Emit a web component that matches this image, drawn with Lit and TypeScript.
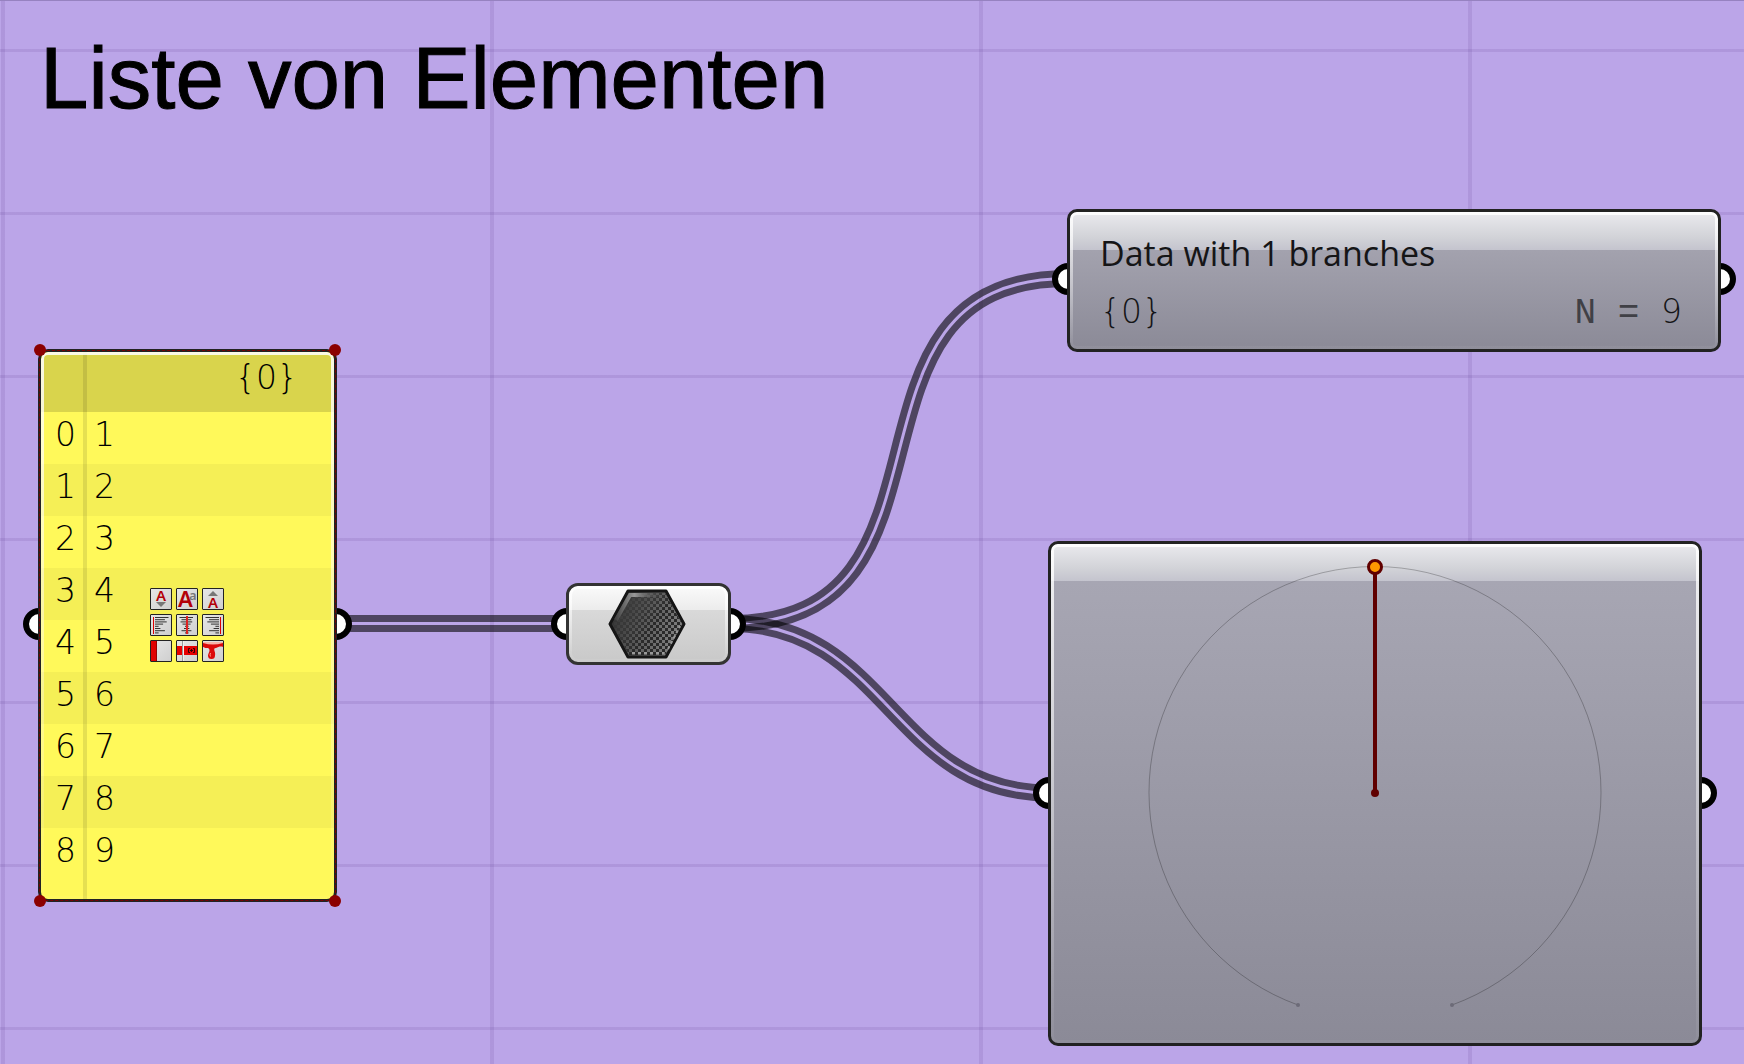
import { LitElement, html, css, svg } from "lit";
import { customElement, property } from "lit/decorators.js";

const shellStyles = css`
  :host {
    display: block;
  }
  .shell {
    position: relative;
    box-sizing: border-box;
    width: 100%;
    height: 100%;
    border: 3px solid #222;
    border-radius: 10px;
    overflow: hidden;
  }
  .shell::after {
    content: "";
    position: absolute;
    inset: 0;
    padding: 3px;
    border-radius: 7px;
    pointer-events: none;
    background: linear-gradient(rgba(255, 255, 255, 0.85), rgba(255, 255, 255, 0.04));
    mask: linear-gradient(#000 0 0) content-box exclude, linear-gradient(#000 0 0);
  }
`;

/* Panel that lists the items of one branch */
@customElement("list-panel")
class ListPanel extends LitElement {
  @property({ type: Array }) items: number[] = [];

  static styles = [
    shellStyles,
    css`
      .shell {
        background: linear-gradient(90deg, transparent 42px, rgba(0, 0, 0, 0.1) 42px 46px, transparent 46px), #fff95a;
      }
      .outline {
        position: absolute;
        inset: 1px;
        border: 1px dashed #7a0000;
        border-radius: 8px;
        pointer-events: none;
      }
      .grip {
        position: absolute;
        width: 12px;
        height: 12px;
        border-radius: 50%;
        background: #8b0000;
      }
      .tl { left: -4px; top: -5px; }
      .tr { right: -4px; top: -5px; }
      .bl { left: -4px; bottom: -5px; }
      .br { right: -4px; bottom: -5px; }
      table {
        width: 100%;
        border-collapse: separate;
        border-spacing: 0;
        font: 200 33px/46px "DejaVu Sans", sans-serif;
        color: #000;
      }
      th,
      td {
        height: 52px;
        box-sizing: border-box;
        padding: 0 36px 0 7px;
        vertical-align: top;
        font-weight: 200;
        text-align: left;
      }
      thead th {
        height: 60px;
        padding-top: 3px;
        text-align: right;
      }
      thead tr {
        background: rgba(0, 0, 0, 0.15);
      }
      .index {
        width: 46px;
        padding: 0 0 0 14px;
        border-right: 4px solid transparent;
      }
      tbody tr:nth-child(even) {
        background: rgba(0, 0, 0, 0.04);
      }
      .tools {
        position: absolute;
        left: 112px;
        top: 239px;
        display: grid;
        grid-template-columns: repeat(3, 22px);
        gap: 4px;
      }
      button {
        width: 22px;
        height: 22px;
        padding: 0;
        border: 1px solid #222;
        border-radius: 1px;
        background: linear-gradient(135deg, #e6e6e6, #cfcfcf);
      }
      button svg {
        display: block;
        overflow: visible;
      }
      text {
        font-family: "Noto Sans", sans-serif;
        font-weight: 600;
        fill: #b30008;
      }
    `,
  ];

  private lines(kind: "left" | "center" | "right") {
    return [15, 11, 13, 9, 4, 6, 11, 4].map((w, i) => {
      const x = kind === "left" ? 4 : kind === "right" ? 16 - w * 0.9 : 10 - w / 2;
      return svg`<rect x=${x} y=${2 + i * 2.2} width=${w * 0.9} height="1" fill="#333"/>`;
    });
  }

  private tool(label: string, body: unknown) {
    return html`<button type="button" aria-label=${label}>
      <svg width="20" height="20" viewBox="0 0 20 20">${body}</svg>
    </button>`;
  }

  render() {
    return html`
      <div class="shell">
        <table>
          <thead>
            <tr>
              <th class="index"></th>
              <th scope="col">{0}</th>
            </tr>
          </thead>
          <tbody>
            ${this.items.map(
              (item, i) => html`<tr>
                <th class="index" scope="row">${i}</th>
                <td>${item}</td>
              </tr>`
            )}
          </tbody>
        </table>
      </div>
      <div class="outline"></div>
      <span class="grip tl"></span><span class="grip tr"></span>
      <span class="grip bl"></span><span class="grip br"></span>
      <div class="tools">
        ${this.tool("Smaller text", svg`<text x="10" y="12" font-size="15" text-anchor="middle">A</text>
          <path d="M5 13h10l-5 5z" fill="#777"/>`)}
        ${this.tool("Font", svg`<text x="1" y="18" font-size="22">A</text>
          <text x="12" y="11" font-size="13" style="fill:#777">a</text>`)}
        ${this.tool("Larger text", svg`<path d="M5 7h10l-5-5z" fill="#777"/>
          <text x="10" y="19" font-size="15" text-anchor="middle">A</text>`)}
        ${this.tool("Align left", svg`${this.lines("left")}<rect x="2" y="2" width="1" height="17" fill="#d00"/>`)}
        ${this.tool("Align centre", svg`${this.lines("center")}<rect x="9" y="1" width="2" height="18" fill="#d22"/>`)}
        ${this.tool("Align right", svg`${this.lines("right")}<rect x="17" y="2" width="1" height="17" fill="#d00"/>`)}
        ${this.tool("Index column", svg`<rect width="6" height="20" fill="#e00000"/><rect x="5" width="1" height="20" fill="#900"/>`)}
        ${this.tool("Row labels", svg`<rect y="5" width="20" height="9" fill="#e60000"/>
          <path d="M5.500 0v20" stroke="#999"/><path d="M6.500 0v20" stroke="#eee"/>
          <path d="M13 7.500h-1.500v4h1.500M16 7.500h1.500v4h-1.500M13 9.500h3M14.500 8v3" fill="none" stroke="#300"/>`)}
        ${this.tool("Colour", svg`<path d="M0 1h20v5c-2-1-5 0-7 1c-2 0-2 1-1.500 3c.7 2 .8 3 .5 4.500a3.500 3.500 0 0 1-7 0c0-2 1.500-3 1.500-5c0-2-1-2.500-3-2.500c-1.500 0-2-.5-3.500-1z" fill="#dc0a0a"/>
          <path d="M0 1h20v1q-10 3-20 0z" fill="#f5b4aa"/><path d="M7.500 12q-1 2 0 3.500" stroke="#ff9a8a" fill="none"/>`)}
      </div>
    `;
  }
}

/* Data relay with the hexagonal badge */
@customElement("data-relay")
class DataRelay extends LitElement {
  static styles = [
    shellStyles,
    css`
      .shell {
        display: flex;
        align-items: center;
        justify-content: center;
        padding-right: 4px;
        border-color: #333;
        border-radius: 12px;
        background: linear-gradient(#fafafa 0%, #ececec 31%, #d9d9d9 32%, #c9c9c9 100%);
      }
      .shell::after {
        border-radius: 9px;
      }
    `,
  ];

  render() {
    return html`<div class="shell">
      <svg width="78" height="70" viewBox="0 0 78 70" role="img" aria-label="Data">
        <defs>
          <linearGradient id="face" x1="0" y1="0.3" x2="1" y2="0.7">
            <stop offset="0" stop-color="#303030" />
            <stop offset="1" stop-color="#888" />
          </linearGradient>
          <linearGradient id="fade" x1="0" y1="0.2" x2="0.6" y2="0.6">
            <stop offset="0.1" stop-color="#000" />
            <stop offset="0.9" stop-color="#fff" />
          </linearGradient>
          <linearGradient id="edge" x1="0" y1="0" x2="1" y2="0">
            <stop offset="0" stop-color="#444" />
            <stop offset="0.4" stop-color="#999" />
            <stop offset="1" stop-color="#555" stop-opacity="0" />
          </linearGradient>
          <pattern id="dots" width="6" height="6" patternUnits="userSpaceOnUse">
            <rect width="3" height="3" fill="#2a2a2a" />
            <rect x="3" y="3" width="3" height="3" fill="#2a2a2a" />
          </pattern>
          <mask id="right"><rect width="78" height="70" fill="url(#fade)" /></mask>
        </defs>
        <path d="M2 35L20 2H58L76 35L58 68H20Z" fill="url(#face)" stroke="#151515" stroke-width="3" stroke-linejoin="round" />
        <path d="M4 35L21 4H57L74 35L57 66H21Z" fill="url(#dots)" mask="url(#right)" />
        <path d="M8 31L22 6H54" fill="none" stroke="url(#edge)" stroke-width="4" />
        <path d="M60 60L72 37M24 64H56" stroke="#999" stroke-width="2" stroke-dasharray="3 3" />
      </svg>
    </div>`;
  }
}

/* Summary of the branches in a data tree */
@customElement("param-viewer")
class ParamViewer extends LitElement {
  @property({ type: Number }) count = 0;

  static styles = [
    shellStyles,
    css`
      .shell {
        padding: 13px 36px 0 30px;
        color: #151517;
        background: linear-gradient(#eaeaee 0, #d2d3d8 25px, #c4c4ce 38px, #a3a2ae 38px, #8b8a97 100%);
      }
      h2 {
        margin: 0;
        font: 400 34px/56px "Open Sans", sans-serif;
      }
      .branch {
        display: flex;
        justify-content: space-between;
        font: 200 33px/62px "DejaVu Sans", sans-serif;
      }
      .mono {
        font: 400 36px/62px "Liberation Mono", monospace;
        color: #404046;
        white-space: pre;
      }
    `,
  ];

  render() {
    return html`<div class="shell">
      <h2>Data with 1 branches</h2>
      <div class="branch">
        <span>{0}</span>
        <span><span class="mono">N = </span>${this.count}</span>
      </div>
    </div>`;
  }
}

/* Radial tree display with one root branch */
@customElement("tree-dial")
class TreeDial extends LitElement {
  static styles = [
    shellStyles,
    css`
      .shell {
        background: linear-gradient(#eaeaee 0, #d2d3d8 24px, #c4c4ce 37px, #a7a6b3 37px, #8b8a97 100%);
      }
      svg {
        display: block;
        margin: 0 auto;
      }
    `,
  ];

  render() {
    return html`<div class="shell">
      <svg width="500" height="490" viewBox="-250 -249 500 490" role="img" aria-label="Tree with one branch">
        <path d="M-77 212A226 226 0 1 1 77 212" fill="none" stroke="#000" stroke-opacity="0.25" />
        <circle cx="-77" cy="212" r="2" fill="#6c6b78" />
        <circle cx="77" cy="212" r="2" fill="#6c6b78" />
        <path d="M0 0V-226" stroke="#600000" stroke-width="4" />
        <circle r="4" fill="#600000" />
        <circle cy="-226" r="6.500" fill="#ff9800" stroke="#600000" stroke-width="3" />
      </svg>
    </div>`;
  }
}

interface Wire {
  from: [number, number];
  to: [number, number];
  reach: number;
}

const wires: Wire[] = [
  { from: [340, 623.5], to: [563, 623.5], reach: 110 },
  { from: [730, 623.5], to: [1068, 278.5], reach: 250 },
  { from: [730, 623.5], to: [1050, 793], reach: 158 },
];

function wirePath({ from: [x1, y1], to: [x2, y2], reach }: Wire) {
  return `M${x1} ${y1}C${x1 + reach} ${y1} ${x2 - reach} ${y2} ${x2} ${y2}`;
}

@customElement("app-root")
class AppRoot extends LitElement {
  static styles = css`
    :host {
      display: block;
      position: relative;
      min-height: 100vh;
      overflow: hidden;
      box-sizing: border-box;
      border-top: 1px solid #9682c0;
      background:
        repeating-linear-gradient(90deg, rgba(60, 20, 110, 0.1) 0 4px, transparent 4px 489px) 1px 0,
        repeating-linear-gradient(rgba(60, 20, 110, 0.1) 0 3px, transparent 3px 163px) 0 48px / 100% 163px,
        #bba5e8;
      background-repeat: repeat;
    }
    h1 {
      margin: 0;
      padding: 27px 40px;
      font: 400 87px/100px "Liberation Sans", Arial, sans-serif;
      color: #000;
      -webkit-text-stroke: 1px #000;
    }
    .wires {
      position: absolute;
      left: 0;
      top: -1px;
      overflow: visible;
    }
    .node {
      position: absolute;
    }
    .node > :last-child {
      position: relative;
      width: 100%;
      height: 100%;
    }
    .port {
      position: absolute;
      width: 32px;
      height: 32px;
      box-sizing: border-box;
      border: 6px solid #000;
      border-radius: 50%;
      background: #fff;
      transform: translateY(-50%);
    }
    .in { left: -15px; }
    .out { right: -15px; }
    .panel { left: 38px; top: 348px; width: 299px; height: 553px; }
    .panel .port { top: 275px; }
    .relay { left: 566px; top: 582px; width: 165px; height: 82px; }
    .relay .port { top: 41px; }
    .viewer { left: 1067px; top: 208px; width: 654px; height: 143px; }
    .viewer .port { top: 70px; }
    .dial { left: 1048px; top: 540px; width: 654px; height: 505px; }
    .dial .port { top: 252px; }
  `;

  private node(name: string, body: unknown) {
    return html`<section class="node ${name}">
      <span class="port in"></span><span class="port out"></span>${body}
    </section>`;
  }

  render() {
    return html`
      <h1>Liste von Elementen</h1>
      <svg class="wires" width="1744" height="1064" aria-hidden="true">
        ${wires.map((wire, i) => {
          const d = wirePath(wire);
          return svg`
            <mask id="wire${i}" maskUnits="userSpaceOnUse" x="0" y="0" width="1744" height="1064">
              <path d=${d} fill="none" stroke="#fff" stroke-width="17"/>
              <path d=${d} fill="none" stroke="#000" stroke-width="3"/>
            </mask>
            <rect width="1744" height="1064" fill="#000" fill-opacity="0.58" mask="url(#wire${i})"/>`;
        })}
      </svg>
      ${this.node("panel", html`<list-panel .items=${[1, 2, 3, 4, 5, 6, 7, 8, 9]}></list-panel>`)}
      ${this.node("relay", html`<data-relay></data-relay>`)}
      ${this.node("viewer", html`<param-viewer .count=${9}></param-viewer>`)}
      ${this.node("dial", html`<tree-dial></tree-dial>`)}
    `;
  }
}
